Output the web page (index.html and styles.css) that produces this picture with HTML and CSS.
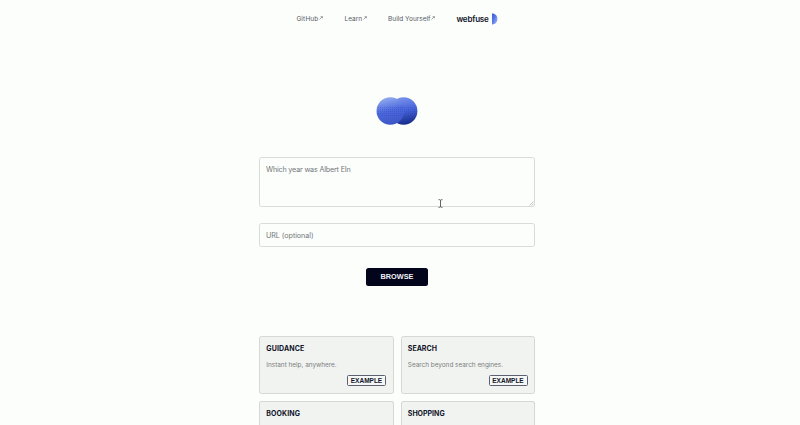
FILE: index.html
```html
<!DOCTYPE html>
<html lang="en">
<head>
<meta charset="utf-8">
<title>webfuse</title>
<link rel="stylesheet" href="styles.css">
</head>
<body>
<nav class="nav">
  <a class="link github"><span>GitHub</span><svg class="arrow" viewBox="0 0 4 4"><path d="M.5 3.5 3.3.7M1.6.6h1.8v1.8"/></svg></a>
  <a class="link learn"><span>Learn</span><svg class="arrow" viewBox="0 0 4 4"><path d="M.5 3.5 3.3.7M1.6.6h1.8v1.8"/></svg></a>
  <a class="link build"><span>Build Yourself</span><svg class="arrow" viewBox="0 0 4 4"><path d="M.5 3.5 3.3.7M1.6.6h1.8v1.8"/></svg></a>
  <a class="brand"><span class="brand-name">webfuse</span><svg class="brand-mark" viewBox="0 0 7 12"><defs><linearGradient id="m" x2="1" y2="1"><stop stop-color="#3157d4"/><stop offset=".5" stop-color="#627eea"/><stop offset="1" stop-color="#b1c3f7"/></linearGradient></defs><path d="M1 .6C4 .4 6.4 2.7 6.4 6S4 11.6 1 11.4Z" fill="url(#m)"/></svg></a>
</nav>
<main class="column">
  <svg class="logo" viewBox="0 0 42 28">
    <defs>
      <linearGradient id="left" x1=".35" y1="0" x2=".6" y2="1"><stop stop-color="#93adef"/><stop offset=".5" stop-color="#4c68dd"/><stop offset="1" stop-color="#3c55c4"/></linearGradient>
      <linearGradient id="right" x1=".4" y1="0" x2=".6" y2="1"><stop stop-color="#7892ec"/><stop offset=".5" stop-color="#4662d8"/><stop offset="1" stop-color="#142a86"/></linearGradient>
      <pattern id="dots" width="2" height="2" patternUnits="userSpaceOnUse"><path d="M0 0h1v1H0z" fill="#263fae"/></pattern>
    </defs>
    <circle cx="27.6" cy="14" r="13.8" fill="url(#right)"/>
    <circle cx="14.3" cy="14" r="13.8" fill="url(#left)"/>
    <path d="M2 10h37.5l1 5-2 5H4l-3-5z" fill="url(#dots)" opacity=".3"/>
  </svg>
  <div class="field prompt"><span class="prompt-text">Which year was Albert EIn</span>
    <svg class="grip" viewBox="0 0 5 5"><path d="M.5 4.5l4-4M2.7 4.5l1.8-1.8"/></svg>
    <svg class="cursor" viewBox="0 0 5 9"><path d="M.5.7h1.3l.7.5.7-.5h1.3M2.5 1v7M.5 8.3h1.3l.7-.5.7.5h1.3"/></svg>
  </div>
  <div class="field url"><span class="url-text">URL (optional)</span></div>
  <button class="browse">BROWSE</button>
  <section class="cards">
    <article class="card"><h2 class="guidance">GUIDANCE</h2><p>Instant help, anywhere.</p><button class="example">EXAMPLE</button></article>
    <article class="card"><h2>SEARCH</h2><p>Search beyond search engines.</p><button class="example">EXAMPLE</button></article>
    <article class="card cut"><h2 class="booking">BOOKING</h2></article>
    <article class="card cut"><h2>SHOPPING</h2></article>
  </section>
</main>
</body>
</html>
```
FILE: styles.css
```css
* { box-sizing: border-box; }
html { background: #fcfefc; }
body { margin: 0; height: 425px; overflow: hidden; padding-right: 6px; font-family: Inter, "Liberation Sans", sans-serif; color: #101329; }
svg { display: block; }
.nav { display: flex; justify-content: center; align-items: center; height: 38px; gap: 21px; }
.link { display: flex; font-size: 6.5px; line-height: 9px; padding-top: 1px; color: #555961; white-space: nowrap; }
.github { letter-spacing: .15px; }
.arrow { width: 4px; height: 4px; margin: 1px 0 0 1px; fill: none; stroke: #686b70; stroke-width: .6; }
.brand { display: flex; align-items: center; }
.brand-name { font-size: 8px; line-height: 10px; font-weight: 600; letter-spacing: -.18px; }
.brand-mark { width: 7px; height: 12px; margin-left: 2px; }
.column { width: 276px; margin: 0 auto; display: flex; flex-direction: column; align-items: center; }
.logo { width: 42px; height: 28px; margin-top: 59px; }
.field { position: relative; width: 276px; border: 1px solid #d9dbd9; border-radius: 2.5px; padding: 0 6px; font-size: 7.2px; color: #73777a; white-space: nowrap; }
.prompt { height: 50px; margin-top: 32px; line-height: 23px; }
.prompt-text { letter-spacing: -.18px; }
.url-text { letter-spacing: -.06px; }
.url { height: 24px; margin-top: 16px; line-height: 23px; }
.grip { position: absolute; right: 0; bottom: 0; width: 5px; height: 5px; stroke: #999; stroke-width: .6; }
.cursor { position: absolute; left: 178px; top: 41px; width: 5px; height: 9px; fill: none; stroke: #555; stroke-width: .9; }
.browse { width: 62px; height: 18px; margin-top: 21px; padding: 0; border: 0; border-radius: 2.5px; background: #02051c; color: #f0f1f7; font: bold 7.3px/18px "Liberation Sans", sans-serif; }
.cards { display: grid; grid-template-columns: 134.5px 134.5px; gap: 7px; width: 276px; margin-top: 50px; }
.card { display: flex; flex-direction: column; height: 58px; background: #f1f3f1; border: 1px solid #d5d8d6; border-radius: 2.5px; padding: 7px 6.5px 7px 6.3px; }
.cut { height: 24px; padding-bottom: 0; border-bottom: 0; border-radius: 2.5px 2.5px 0 0; }
h2 { margin: 0; font-size: 7px; line-height: 10px; font-weight: 700; }
.guidance { letter-spacing: .12px; }
.booking { letter-spacing: .1px; }
p { margin: 6px 0 0; font-size: 6.4px; line-height: 10px; color: #7b7e80; white-space: nowrap; }
.example { align-self: flex-end; flex: none; width: 39px; height: 11px; margin-top: 5px; padding: 0; border: 1px solid #5d6070; border-radius: 1.5px; background: #f5f6f6; color: #14172c; font: bold 6.5px/9px "Liberation Sans", sans-serif; }
```
